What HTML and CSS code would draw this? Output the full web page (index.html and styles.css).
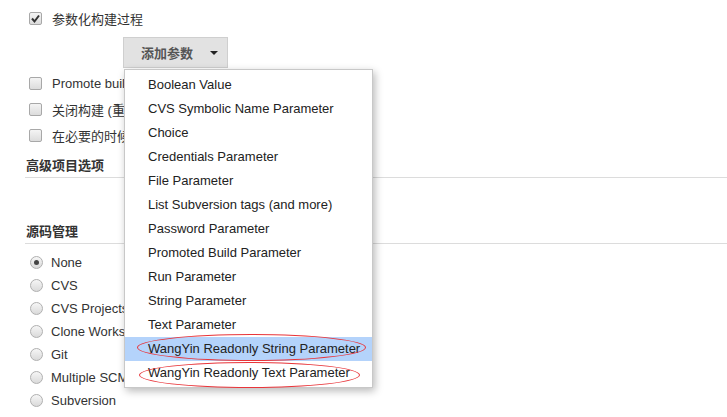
FILE: index.html
```html
<!DOCTYPE html>
<html lang="zh">
<head>
<meta charset="utf-8">
<link rel="stylesheet" href="styles.css">
</head>
<body>
<div class="page">
  <div class="opt"><span class="cb checked"><svg viewBox="0 0 13 13" width="13" height="13"><path d="M3 6.5 L5.5 9.5 L10 3.5" fill="none" stroke="#333" stroke-width="2"/></svg></span><span class="lbl">参数化构建过程</span></div>
  <div class="btnrow">
    <div class="dd">
      <button class="btn">添加参数<span class="caret"></span></button>
      <ul class="menu">
        <li>Boolean Value</li>
        <li>CVS Symbolic Name Parameter</li>
        <li>Choice</li>
        <li>Credentials Parameter</li>
        <li>File Parameter</li>
        <li>List Subversion tags (and more)</li>
        <li>Password Parameter</li>
        <li>Promoted Build Parameter</li>
        <li>Run Parameter</li>
        <li>String Parameter</li>
        <li>Text Parameter</li>
        <li class="hl">WangYin Readonly String Parameter<span class="ring r1"></span></li>
        <li>WangYin Readonly Text Parameter<span class="ring r2"></span></li>
      </ul>
    </div>
  </div>
  <div class="opts">
    <div class="opt2"><span class="cb"></span><span class="lbl clip">Promote builds when...</span></div>
    <div class="opt2"><span class="cb"></span><span class="lbl clip">关闭构建 (重新开启构建前不允许再进行新的构建)</span></div>
    <div class="opt2"><span class="cb"></span><span class="lbl clip">在必要的时候并发构建</span></div>
  </div>
  <div class="section first">高级项目选项</div>
  <div class="section second">源码管理</div>
  <div class="radios">
    <div class="radio"><span class="rb on"></span><span>None</span></div>
    <div class="radio"><span class="rb"></span><span>CVS</span></div>
    <div class="radio"><span class="rb"></span><span>CVS Projectset</span></div>
    <div class="radio"><span class="rb"></span><span>Clone Workspace</span></div>
    <div class="radio"><span class="rb"></span><span>Git</span></div>
    <div class="radio"><span class="rb"></span><span>Multiple SCMs</span></div>
    <div class="radio"><span class="rb"></span><span>Subversion</span></div>
  </div>
</div>
</body>
</html>
```

FILE: styles.css
```css
html, body {
  margin: 0;
  padding: 0;
  background: #fff;
}
body {
  font-family: "Liberation Sans", Arial, "Noto Sans CJK SC", sans-serif;
  font-size: 13px;
  color: #333;
  overflow: hidden;
}
.page {
  padding-top: 6px;
}
.opt, .opt2 {
  display: flex;
  align-items: center;
  padding-left: 29px;
  white-space: nowrap;
}
.opt { height: 24px; }
.opt2 { height: 26px; }
.lbl { margin-left: 10px; }
.lbl.clip {
  display: block;
  max-width: 72px;
  overflow: hidden;
}
.cb {
  width: 11px;
  height: 11px;
  border: 1px solid #a8a8a8;
  border-radius: 2px;
  background: linear-gradient(#f4f4f4, #dcdcdc);
  display: inline-flex;
  align-items: center;
  justify-content: center;
  flex: none;
  overflow: hidden;
}
.cb svg { flex: none; }
.btnrow {
  margin-top: 7px;
  padding-left: 123px;
  height: 31px;
}
.dd {
  position: relative;
  display: inline-block;
}
.btn {
  height: 31px;
  width: 105px;
  box-sizing: border-box;
  border: 1px solid #cfcfcf;
  background: #e2e2e2;
  font-family: "Liberation Sans", Arial, "Noto Sans CJK SC", sans-serif;
  font-size: 13px;
  font-weight: bold;
  color: #555;
  padding: 0 0 0 8px;
  display: flex;
  align-items: center;
  justify-content: center;
  gap: 17px;
}
.caret {
  width: 0;
  height: 0;
  border-left: 4px solid transparent;
  border-right: 4px solid transparent;
  border-top: 4px solid #222;
}
.menu {
  position: absolute;
  left: 1px;
  top: 32px;
  z-index: 5;
  margin: 0;
  padding: 3px 0 2px;
  list-style: none;
  width: 247px;
  background: #fff;
  border: 1px solid #c8c8c8;
  box-shadow: 2px 3px 8px rgba(0,0,0,0.28);
}
.menu li {
  position: relative;
  height: 24px;
  line-height: 24px;
  padding-left: 23px;
  white-space: nowrap;
  color: #222;
}
.menu li.hl { background: #b4d3fb; }
.ring {
  position: absolute;
  border: 1px solid #e8353a;
  border-radius: 50%;
}
.r1 { left: 12px; width: 227px; top: -3px; height: 25px; }
.r2 { left: 14px; width: 219px; top: 1px; height: 24px; }
.opts { margin-top: 2px; }
.section {
  margin-left: 25px;
  font-weight: bold;
  height: 20px;
  line-height: 20px;
  padding-left: 1px;
  padding-bottom: 1px;
  border-bottom: 1px solid #dcdcdc;
  color: #333;
}
.section.first { margin-top: 8px; }
.section.second { margin-top: 44px; }
.radios { margin-top: 7px; }
.radio {
  display: flex;
  align-items: center;
  height: 23px;
  padding-left: 30px;
  white-space: nowrap;
}
.radio span:last-child { margin-left: 8px; }
.rb {
  width: 11px;
  height: 11px;
  border: 1px solid #b0b0b0;
  border-radius: 50%;
  background: linear-gradient(#f6f6f6, #dadada);
  position: relative;
  flex: none;
}
.rb.on::after {
  content: "";
  position: absolute;
  left: 3px;
  top: 3px;
  width: 5px;
  height: 5px;
  border-radius: 50%;
  background: #444;
}
```
